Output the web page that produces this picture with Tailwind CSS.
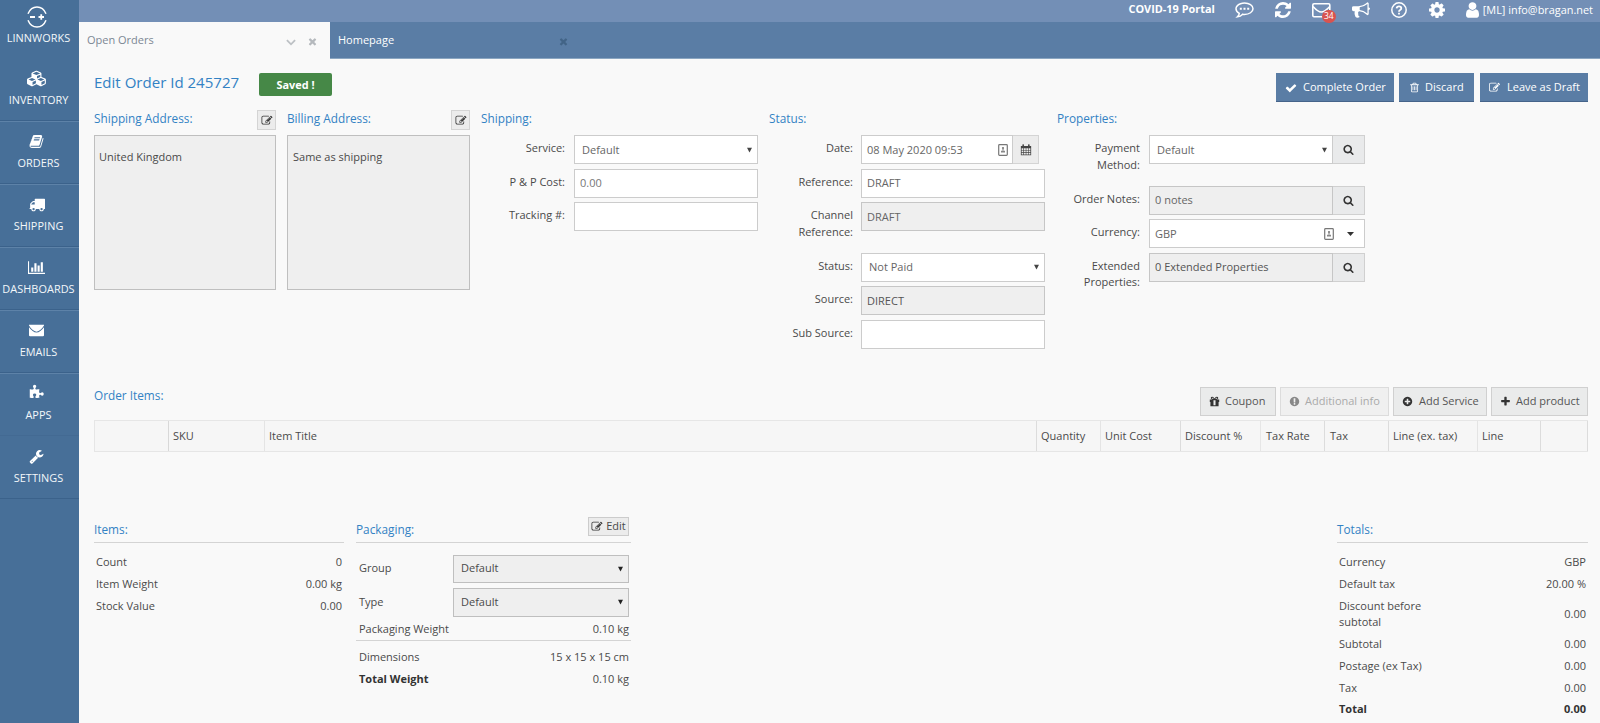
<!DOCTYPE html>
<html lang="en">
<head>
<meta charset="utf-8">
<title>Edit Order</title>
<script src="https://cdn.jsdelivr.net/npm/@tailwindcss/browser@4"></script>
</head>
<body class="h-[723px] w-[1600px] overflow-hidden bg-[#f9f9f9] font-['Open_Sans',sans-serif] text-[11px] leading-[16.75px] text-[#4a4a4a]">
<svg class="hidden" xmlns="http://www.w3.org/2000/svg">
<symbol id="check" viewBox="0 0 1792 1792"><path d="M1671 566q0 40-28 68l-724 724-136 136q-28 28-68 28t-68-28l-136-136-362-362q-28-28-28-68t28-68l136-136q28-28 68-28t68 28l294 295 656-657q28-28 68-28t68 28l136 136q28 28 28 68z"/></symbol>
<symbol id="times" viewBox="0 0 1792 1792"><path d="M1490 1322q0 40-28 68l-136 136q-28 28-68 28t-68-28l-294-294-294 294q-28 28-68 28t-68-28l-136-136q-28-28-28-68t28-68l294-294-294-294q-28-28-28-68t28-68l136-136q28-28 68-28t68 28l294 294 294-294q28-28 68-28t68 28l136 136q28 28 28 68t-28 68l-294 294 294 294q28 28 28 68z"/></symbol>
<symbol id="search" viewBox="0 0 1792 1792"><path d="M1216 832q0-185-131.5-316.5t-316.5-131.5-316.5 131.5-131.5 316.5 131.5 316.5 316.5 131.5 316.5-131.5 131.5-316.5zm512 832q0 52-38 90t-90 38q-54 0-90-38l-343-342q-179 124-399 124-143 0-273.5-55.5t-225-150-150-225-55.5-273.5 55.5-273.5 150-225 225-150 273.5-55.5 273.5 55.5 225 150 150 225 55.5 273.5q0 220-124 399l343 343q37 37 37 90z"/></symbol>
<symbol id="plus" viewBox="0 0 1792 1792"><path d="M1600 736v192q0 40-28 68t-68 28h-416v416q0 40-28 68t-68 28h-192q-40 0-68-28t-28-68v-416h-416q-40 0-68-28t-28-68v-192q0-40 28-68t68-28h416v-416q0-40 28-68t68-28h192q40 0 68 28t28 68v416h416q40 0 68 28t28 68z"/></symbol>
<symbol id="plusc" viewBox="0 0 1792 1792"><path d="M1344 960v-128q0-26-19-45t-45-19h-256v-256q0-26-19-45t-45-19h-128q-26 0-45 19t-19 45v256h-256q-26 0-45 19t-19 45v128q0 26 19 45t45 19h256v256q0 26 19 45t45 19h128q26 0 45-19t19-45v-256h256q26 0 45-19t19-45zm320-64q0 209-103 385.5t-279.5 279.5-385.5 103-385.5-103-279.5-279.5-103-385.5 103-385.5 279.5-279.5 385.5-103 385.5 103 279.5 279.5 103 385.5z"/></symbol>
<symbol id="excl" viewBox="0 0 1792 1792"><path d="M896 128q209 0 385.5 103t279.5 279.5 103 385.5-103 385.5-279.5 279.5-385.5 103-385.5-103-279.5-279.5-103-385.5 103-385.5 279.5-279.5 385.5-103zm128 1247v-190q0-14-9-23.5t-22-9.5h-192q-13 0-23 10t-10 23v190q0 13 10 23t23 10h192q13 0 22-9.5t9-23.5zm-2-344l18-621q0-12-10-18-10-8-24-8h-220q-14 0-24 8-10 6-10 18l17 621q0 10 10 17.5t24 7.5h185q14 0 23.5-7.5t10.5-17.5z"/></symbol>
<symbol id="edit" viewBox="0 0 1792 1792"><path d="M888 1184l116-116-152-152-116 116v56h96v96h56zm440-720q-16-16-33 1l-350 350q-17 17-1 33t33-1l350-350q17-17 1-33zm80 594v190q0 119-84.5 203.5t-203.5 84.5h-832q-119 0-203.5-84.5t-84.5-203.5v-832q0-119 84.5-203.5t203.5-84.5h832q63 0 117 25 15 7 18 23 3 17-9 29l-49 49q-14 14-32 8-23-6-45-6h-832q-66 0-113 47t-47 113v832q0 66 47 113t113 47h832q66 0 113-47t47-113v-126q0-13 9-22l64-64q15-15 35-7t20 29zm-96-738l288 288-672 672h-288v-288zm444 132l-92 92-288-288 92-92q28-28 68-28t68 28l152 152q28 28 28 68t-28 68z"/></symbol>
<symbol id="trash" viewBox="0 0 1792 1792"><path d="M704 736v576q0 14-9 23t-23 9h-64q-14 0-23-9t-9-23v-576q0-14 9-23t23-9h64q14 0 23 9t9 23zm256 0v576q0 14-9 23t-23 9h-64q-14 0-23-9t-9-23v-576q0-14 9-23t23-9h64q14 0 23 9t9 23zm256 0v576q0 14-9 23t-23 9h-64q-14 0-23-9t-9-23v-576q0-14 9-23t23-9h64q14 0 23 9t9 23zm128 724v-948h-896v948q0 22 7 40.5t14.5 27 10.5 8.5h832q3 0 10.5-8.5t14.5-27 7-40.5zm-672-1076h448l-48-117q-7-9-17-11h-317q-10 2-17 11zm928 32v64q0 14-9 23t-23 9h-96v948q0 83-47 143.5t-113 60.5h-832q-66 0-113-58.5t-47-141.5v-952h-96q-14 0-23-9t-9-23v-64q0-14 9-23t23-9h309l70-167q15-37 54-63t79-26h320q40 0 79 26t54 63l70 167h309q14 0 23 9t9 23z"/></symbol>
<symbol id="env" viewBox="0 0 16 14"><path d="M0 .8h16v.9Q12.500 7.600 8 8.200 3.500 7.600 0 1.700zM0 3.400Q3.800 8.700 8 9.200 12.200 8.700 16 3.400V12q0 1.200-1.200 1.200H1.200Q0 13.200 0 12z"/></symbol>
<symbol id="chart" viewBox="0 0 2048 1792"><path d="M640 896v512h-256v-512h256zm384-512v1024h-256v-1024h256zm1024 1152v128h-2048v-1536h128v1408h1920zm-640-896v768h-256v-768h256zm384-384v1152h-256v-1152h256z"/></symbol>
<symbol id="wrench" viewBox="0 0 1792 1792"><path d="M448 1472q0-26-19-45t-45-19-45 19-19 45 19 45 45 19 45-19 19-45zm644-420l-682 682q-37 37-90 37-52 0-91-37l-106-108q-38-36-38-90 0-53 38-91l681-681q39 98 114.5 173.5t173.5 114.5zm634-435q0 39-23 106-47 134-164.500 217.500t-258.500 83.500q-185 0-316.500-131.500t-131.500-316.500 131.500-316.500 316.500-131.500q58 0 121.500 16.500t107.500 46.500q16 11 16 28t-16 28l-293 169v224l193 107q5-3 79-48.500t135.500-81 70.500-35.500q15 0 23.500 10t8.500 25z"/></symbol>
<symbol id="truck" viewBox="0 0 1792 1792"><path d="M640 1408q0-52-38-90t-90-38-90 38-38 90 38 90 90 38 90-38 38-90zm-384-512h384v-256h-158q-13 0-22 9l-195 195q-9 9-9 22v30zm1280 512q0-52-38-90t-90-38-90 38-38 90 38 90 90 38 90-38 38-90zm256-1088v1024q0 15-4 26.500t-13.500 18.500-16.500 11.500-23.500 6-22.500 2-25.500 0-22.500-.5q0 106-75 181t-181 75-181-75-75-181h-384q0 106-75 181t-181 75-181-75-75-181h-64q-3 0-22.500.5t-25.500 0-22.500-2-23.500-6-16.500-11.500-13.500-18.500-4-26.500q0-26 19-45t45-19v-320q0-8-.5-35t0-38 2.500-34.500 6.500-37 14-30.500 22.500-30l198-198q19-19 50.500-32t58.500-13h160v-192q0-26 19-45t45-19h1024q26 0 45 19t19 45z"/></symbol>
<symbol id="book" viewBox="0 0 1792 1792"><path d="M1703 478q40 57 18 129l-275 906q-19 64-76.500 107.500t-122.500 43.500h-923q-77 0-148.500-53.500t-99.500-131.500q-24-67-2-127 0-4 3-27t4-37q1-8-3-21.500t-3-19.500q2-11 8-21t16.500-23.500 16.500-23.500q23-38 45-91.500t30-91.500q3-10 .5-30t-.5-28q3-11 17-28t17-23q21-36 42-92t25-90q1-9-2.500-32t.5-28q4-13 22-30.500t22-22.500q19-26 42.500-84.500t27.500-96.500q1-8-3-25.500t-2-26.500q2-8 9-18t18-23 17-21q8-12 16.500-30.500t15-35 16-36 19.500-32 26.500-23.500 36-11.500 47.500 5.500l-1 3q38-9 51-9h761q74 0 114 56t18 130l-274 906q-36 119-71.500 153.500t-128.500 34.500h-869q-27 0-38 15-11 16-1 43 24 70 144 70h923q29 0 56-15.500t35-41.500l300-987q7-22 5-57 38 15 59 43zm-1064 2q-4 13 2 22.500t20 9.500h608q13 0 25.500-9.500t16.500-22.500l21-64q4-13-2-22.500t-20-9.500h-608q-13 0-25.500 9.500t-16.500 22.500zm-83 256q-4 13 2 22.500t20 9.500h608q13 0 25.500-9.500t16.500-22.500l21-64q4-13-2-22.500t-20-9.500h-608q-13 0-25.500 9.500t-16.500 22.500z"/></symbol>
<symbol id="user" viewBox="256 128 1280 1536"><path d="M1536 1399q0 109-62.500 187t-150.500 78h-854q-88 0-150.500-78t-62.500-187q0-85 8.500-160.500t31.500-152 58.500-131 94-89 134.500-34.500q131 128 313 128t313-128q76 0 134.500 34.500t94 89 58.500 131 31.500 152 8.500 160.500zm-256-887q0 159-112.500 271.500t-271.500 112.500-271.500-112.500-112.500-271.500 112.500-271.500 271.500-112.500 271.500 112.500 112.500 271.500z"/></symbol>
<symbol id="cog" viewBox="128 128 1536 1536"><path d="M1152 896q0-106-75-181t-181-75-181 75-75 181 75 181 181 75 181-75 75-181zm512-109v222q0 12-8 23t-20 13l-185 28q-19 54-39 91 35 50 107 138 10 12 10 25t-9 23q-27 37-99 108t-94 71q-12 0-26-9l-138-108q-44 23-91 38-16 136-29 186-7 28-36 28h-222q-14 0-24.500-8.500t-11.500-21.500l-28-184q-49-16-90-37l-141 107q-10 9-25 9-14 0-25-11-126-114-165-168-7-10-7-23 0-12 8-23 15-21 51-66.500t54-70.500q-27-50-41-99l-183-27q-13-2-21-12.500t-8-23.500v-222q0-12 8-23t19-13l186-28q14-46 39-92-40-57-107-138-10-12-10-24 0-10 9-23 26-36 98.500-107.500t94.500-71.500q13 0 26 10l138 107q44-23 91-38 16-136 29-186 7-28 36-28h222q14 0 24.500 8.500t11.500 21.500l28 184q49 16 90 37l142-107q9-9 24-9 13 0 25 10 129 119 165 170 7 8 7 22 0 12-8 23-15 21-51 66.500t-54 70.500q26 50 41 98l183 28q13 2 21 12.500t8 23.500z"/></symbol>
<symbol id="refresh" viewBox="128 128 1536 1536"><path d="M1639 1056q0 5-1 7-64 268-268 434.500t-478 166.500q-146 0-282.500-55t-243.500-157l-129 129q-19 19-45 19t-45-19-19-45v-448q0-26 19-45t45-19h448q26 0 45 19t19 45-19 45l-137 137q71 66 161 102t187 36q134 0 250-65t186-179q11-17 53-117 8-23 30-23h192q13 0 22.500 9.500t9.500 22.500zm25-800v448q0 26-19 45t-45 19h-448q-26 0-45-19t-19-45 19-45l138-138q-148-137-349-137-134 0-250 65t-186 179q-11 17-53 117-8 23-30 23h-199q-13 0-22.500-9.500t-9.500-22.500v-7q65-268 270-434.500t480-166.500q146 0 284 55.500t245 156.500l130-129q19-19 45-19t45 19 19 45z"/></symbol>
<symbol id="horn" viewBox="0 0 1792 1792"><path d="M1664 640q53 0 90.500 37.500t37.500 90.500-37.500 90.500-90.500 37.500v384q0 52-38 90t-90 38q-417-347-812-380-58 19-91 66t-31 100.500 40 92.500q-20 33-23 65.500t6 58 33.500 55 48 50 61.500 50.500q-29 58-111.500 83t-168.500 11.500-132-55.500q-7-23-29.500-87.500t-32-94.500-23-89-15-101 3.500-98.500 22-110.500h-122q-66 0-113-47t-47-113v-192q0-66 47-113t113-47h480q435 0 896-384 52 0 90 38t38 90v384zm-128 604v-954q-394 302-768 343v270q377 42 768 341z"/></symbol>
<symbol id="puzzle" viewBox="0 0 1792 1792"><path d="M1755 1083q0 81-44.500 135t-123.500 54q-41 0-77.500-17.500t-59-38-56.500-38-71-17.500q-110 0-110 124 0 39 16 115t15 115v5q-22 0-33 1-34 3-97.500 11.500t-115.500 13.500-98 5q-61 0-103-26.500t-42-83.500q0-37 17.500-71t38-56.500 38-59 17.500-77.500q0-79-54-123.500t-135-44.500q-84 0-143 45.500t-59 127.500q0 43 15 83t33.500 64.500 33.500 53 15 50.500q0 45-46 89-37 35-117 35-95 0-245-24-9-2-27.500-4t-27.500-4l-13-2q-1 0-3-1-2 0-2-1v-1024q2 1 17.500 3.500t34 5 21.500 3.500q150 24 245 24 80 0 117-35 46-44 46-89 0-22-15-50.500t-33.500-53-33.500-64.500-15-83q0-82 59-127.500t144-45.500q80 0 134 44.500t54 123.500q0 41-17.500 77.500t-38 59-38 56.500-17.500 71q0 57 42 83.500t103 26.500q64 0 180-15t163-17v2q-1 2-3.500 17.500t-5 34-3.500 21.500q-24 150-24 245 0 80 35 117 44 46 89 46 22 0 50.500-15t53-33.500 64.500-33.500 83-15q82 0 127.500 59t45.500 143z"/></symbol>
<symbol id="cubes" viewBox="0 0 2304 1792"><path d="M640 1632l384-192v-314l-384 164v342zm-64-454l404-173-404-173-404 173zm1088 454l384-192v-314l-384 164v342zm-64-454l404-173-404-173-404 173zm-448-293l384-165v-266l-384 164v267zm-64-379l441-189-441-189-441 189zm1088 518v416q0 36-19 67t-52 47l-448 224q-25 14-57 14t-57-14l-448-224q-4-2-7-4-2 2-7 4l-448 224q-25 14-57 14t-57-14l-448-224q-33-16-52-47t-19-67v-416q0-38 21.500-70t56.500-48l434-186v-400q0-38 21.500-70t56.500-48l448-192q23-10 50-10t50 10l448 192q35 16 56.500 48t21.500 70v400l434 186q36 16 57 48t21 70z"/></symbol>
<symbol id="cal" viewBox="0 0 14 14"><path fill-rule="evenodd" d="M1 2.200h1.800V.9q0-.6.600-.6h.6q.600 0 .6.600v1.300h4.800V.9q0-.6.600-.6h.6q.600 0 .6.600v1.300H13V13H1zM1.900 5v2h2V5zm2.800 0v2h2V5zm2.700 0v2h2V5zm2.700 0v2h2V5zM1.900 7.700v2h2v-2zm2.800 0v2h2v-2zm2.700 0v2h2v-2zm2.700 0v2h2v-2zM1.900 10.400v1.900h2v-1.900zm2.800 0v1.900h2v-1.900zm2.700 0v1.900h2v-1.900zm2.700 0v1.900h2v-1.900z"/></symbol>
<symbol id="gift" viewBox="0 0 14 14"><path fill-rule="evenodd" d="M1 4.500h3.600Q2 4.300 2.200 2.600 2.500 1 4.300 1.100 5.800 1.300 7 3.300 8.200 1.300 9.700 1.100q1.800-.1 2.100 1.500.2 1.700-2.400 1.900H13v3H12.200V13H1.800V7.500H1zM4.400 2.200q-1 0-1 .7 0 .6 1 .6H6q-.8-1.300-1.600-1.300zm5.200 0q1 0 1 .7 0 .6-1 .6H8q.8-1.300 1.600-1.300zM5.700 5.400v6.400h2.600V5.400z"/></symbol>
<symbol id="card" viewBox="0 0 10 12"><rect x=".7" y=".7" width="8.600" height="10.600" rx=".8" fill="#fff" stroke="#777" stroke-width="1.200"/><circle cx="5" cy="4" r="1.100" fill="#777"/><path d="M4.400 4.500h1.200v2h-1.200zM3 6.800h4v1.800H3z" fill="#888"/></symbol>
<symbol id="tri" viewBox="0 0 6 6"><path d="M0 .3h6L3 6z"/></symbol>
</svg>
<div class="flex h-full">
<nav class="flex h-full w-[79px] shrink-0 flex-col bg-[#476f98] pr-[2px] text-[10.900px] leading-4 tracking-[0.05px] text-[#f3f7fa]">
  <a class="flex h-[57px] flex-col items-center pt-[6px]">
    <svg class="-ml-[4px] h-[22px] w-[20px]" viewBox="0 0 20 22" fill="none" stroke="#fff" stroke-width="1.500"><path d="M1 7.800Q3.800 1 10 1t9 6.800M1 14.200Q3.800 21 10 21t9-6.800"/><path stroke-width="1.800" d="M3 11h5M11.500 11h5.500M14.250 8.200v5.600"/></svg>
    <span class="mt-[2px]">LINNWORKS</span></a>
  <a class="-mr-[2px] flex h-[63px] flex-col items-center pt-[13px] pr-[2px]"><svg class="-ml-[4px] h-[17px] w-[20px] fill-white"><use href="#cubes"/></svg><span class="mt-[5px]">INVENTORY</span></a>
  <a class="-mr-[2px] flex h-[63px] flex-col items-center border-t border-[#3b628b] pt-[12px] pr-[2px] shadow-[inset_0_1px_#5d82a8]"><svg class="-ml-[4px] h-[17px] w-[15px] fill-white"><use href="#book"/></svg><span class="mt-[5px]">ORDERS</span></a>
  <a class="-mr-[2px] flex h-[63px] flex-col items-center border-t border-[#3b628b] pt-[12px] pr-[2px] shadow-[inset_0_1px_#5d82a8]"><svg class="-ml-[3px] h-[17px] w-[16px] fill-white"><use href="#truck"/></svg><span class="mt-[5px]">SHIPPING</span></a>
  <a class="-mr-[2px] flex h-[63px] flex-col items-center border-t border-[#3b628b] pt-[12px] pr-[2px] shadow-[inset_0_1px_#5d82a8]"><svg class="-ml-[4px] h-[17px] w-[17px] fill-white"><use href="#chart"/></svg><span class="mt-[5px]">DASHBOARDS</span></a>
  <a class="-mr-[2px] flex h-[63px] flex-col items-center border-t border-[#3b628b] pt-[12px] pr-[2px] shadow-[inset_0_1px_#5d82a8]"><svg class="-ml-[4px] h-[17px] w-[15px] fill-white"><use href="#env"/></svg><span class="mt-[5px]">EMAILS</span></a>
  <a class="-mr-[2px] flex h-[63px] flex-col items-center border-t border-[#3b628b] pt-[11px] pr-[2px] shadow-[inset_0_1px_#5d82a8]"><svg class="-ml-[4px] h-[17px] w-[15px] fill-white"><use href="#puzzle"/></svg><span class="mt-[6px]">APPS</span></a>
  <a class="-mr-[2px] flex h-[63px] flex-col items-center border-t border-[#436a93] pt-[12px] pr-[2px]"><svg class="-ml-[4px] h-[17px] w-[15px] fill-white"><use href="#wrench"/></svg><span class="mt-[5px]">SETTINGS</span></a>
  <div class="-mr-[2px] border-t border-[#3b628b]"></div>
</nav>
<div class="flex min-w-0 flex-1 flex-col">
  <header class="flex h-[22px] items-center justify-end bg-[#738fb6] pr-[7px] text-white">
    <b class="mr-[20px] pb-[3px] text-[10.900px]">COVID-19 Portal</b>
    <svg class="-mt-[3px] mr-[21px] h-[16px] w-[19px]" viewBox="0 0 19 16" fill="none" stroke="#fff" stroke-width="1.500"><path d="M9.500 1C14.200 1 18 3.500 18 6.700s-3.800 5.700-8.500 5.700q-1 0-1.800-.2Q5.500 14.500 2.500 14.800q1.700-1.500 1.800-3.500Q1 9.600 1 6.700 1 3.500 5.500 1.700 7.400 1 9.500 1z"/><path stroke="none" fill="#fff" d="M4.800 5.700h2v2h-2zM8.500 5.700h2v2h-2zM12.200 5.700h2v2h-2z"/></svg>
    <svg class="-mt-[3px] mr-[21px] h-[16px] w-[16px] fill-white"><use href="#refresh"/></svg>
    <div class="relative mr-[21px] h-[17px] w-[19px]">
      <svg class="h-[15px] w-[19px]" viewBox="0 0 19 15" fill="none" stroke="#fff" stroke-width="1.600"><rect x=".8" y=".8" width="17" height="13" rx="1.200"/><path d="M1 3.500Q6 9 9.300 9T17.800 3.500"/></svg>
      <span class="absolute top-[7px] left-[10px] flex h-[13px] w-[14px] items-center justify-center rounded-full bg-[#d9534f] text-[8.500px] leading-none">34</span>
    </div>
    <svg class="-mt-[3px] mr-[21px] h-[18px] w-[18px] fill-white"><use href="#horn"/></svg>
    <svg class="-mt-[3px] mr-[22px] h-[16px] w-[16px]" viewBox="0 0 16 16" fill="none" stroke="#fff"><circle cx="8" cy="8" r="7.200" stroke-width="1.500"/><path stroke-width="1.800" d="M5.600 6.300Q5.900 4.300 8 4.300q2.300 0 2.300 1.900 0 1.100-1.200 1.800Q8 8.600 8 9.700M8 10.800v1.800"/></svg>
    <svg class="-mt-[3px] mr-[21px] h-[16px] w-[16px] fill-white"><use href="#cog"/></svg>
    <svg class="-mt-[3px] mr-[4px] h-[16px] w-[13px] fill-white"><use href="#user"/></svg>
    <span class="pb-[2px] text-[10.900px]">[ML] info@bragan.net</span>
  </header>
  <div class="flex h-[37px] border-b border-[#8ba6c1] bg-[#5a7da5] text-[11px]">
    <div class="-mb-px flex w-[251px] items-center bg-[#f9f9f9] pl-[8px] text-[#7c8794]"><span class="flex-1">Open Orders</span>
      <svg class="mt-[3px] mr-[11px] h-[7px] w-[10px]" viewBox="0 0 11 7" fill="none" stroke="#bcc0c4" stroke-width="2"><path d="M1 1l4.500 4.500L10 1"/></svg>
      <svg class="mt-[2px] mr-[12px] h-[11px] w-[11px] fill-[#b5b9bd]"><use href="#times"/></svg></div>
    <div class="flex w-[251px] items-center pl-[8px] text-white"><span class="flex-1">Homepage</span><svg class="mt-[2px] mr-[12px] h-[11px] w-[11px] fill-[#426487]"><use href="#times"/></svg></div>
  </div>
  <main class="flex flex-1 flex-col pr-[12px] pl-[15px]">
    <div class="flex h-[51px] pt-[14px]">
      <h1 class="w-[165px] text-[15.050px] leading-[19px] text-[#3382c4] whitespace-nowrap">Edit Order Id 245727</h1>
      <div class="flex h-[23px] w-[73px] items-center justify-center rounded-[2px] bg-[#468847] pt-px text-[10.900px] font-bold text-white">Saved !</div>
      <div class="ml-auto flex gap-[5px] text-[11px] text-white">
        <button class="flex h-[29px] w-[118px] items-center border-b border-[#45648a] bg-[#5a7da5] pt-px pl-[9px]"><svg class="mr-[6px] h-[12px] w-[12px] fill-white"><use href="#check"/></svg>Complete Order</button>
        <button class="flex h-[29px] w-[75px] items-center border-b border-[#45648a] bg-[#5a7da5] pt-px pl-[10px]"><svg class="mr-[5px] h-[11px] w-[11px] fill-white"><use href="#trash"/></svg>Discard</button>
        <button class="ml-[1px] flex h-[29px] w-[108px] items-center border-b border-[#45648a] bg-[#5a7da5] pt-px pl-[9px]"><svg class="mr-[7px] h-[11px] w-[11px] fill-white"><use href="#edit"/></svg>Leave as Draft</button>
      </div>
    </div>
    <div class="flex h-[270px]">
      <section class="mr-[11px] w-[182px]">
        <div class="flex h-[25px] justify-between"><h2 class="text-[11.800px] text-[#3382c4]">Shipping Address:</h2><button class="flex h-[20px] w-[19px] items-center justify-center border border-[#d4d4d4] bg-[#ececec]"><svg class="h-[11px] w-[12px] fill-[#333]"><use href="#edit"/></svg></button></div>
        <div class="h-[155px] border border-[#bfbfbf] bg-[#efefef] pt-[13px] pl-[4px]">United Kingdom</div>
      </section>
      <section class="mr-[11px] w-[183px]">
        <div class="flex h-[25px] justify-between"><h2 class="text-[11.800px] text-[#3382c4]">Billing Address:</h2><button class="flex h-[20px] w-[19px] items-center justify-center border border-[#d4d4d4] bg-[#ececec]"><svg class="h-[11px] w-[12px] fill-[#333]"><use href="#edit"/></svg></button></div>
        <div class="h-[155px] border border-[#bfbfbf] bg-[#efefef] pt-[13px] pl-[5px]">Same as shipping</div>
      </section>
      <section class="w-[288px]">
        <h2 class="h-[25px] text-[11.800px] text-[#3382c4]">Shipping:</h2>
        <div class="flex h-[33.500px]"><label class="mr-[9px] w-[84px] pt-[5px] text-right">Service:</label><div class="flex h-[29px] w-[184px] items-center justify-between border border-[#ccc] bg-white pt-px pr-[5px] pl-[7px] text-[#666]">Default<svg class="h-[6px] w-[5px] fill-[#444]"><use href="#tri"/></svg></div></div>
        <div class="flex h-[33.500px]"><label class="mr-[9px] w-[84px] pt-[5px] text-right">P &amp; P Cost:</label><div class="flex h-[29px] w-[184px] items-center border border-[#ccc] bg-white pt-px pl-[5px] text-[#777]">0.00</div></div>
        <div class="flex h-[33.500px]"><label class="mr-[9px] w-[84px] pt-[5px] text-right">Tracking #:</label><div class="h-[29px] w-[184px] border border-[#ccc] bg-white"></div></div>
      </section>
      <section class="w-[288px]">
        <h2 class="h-[25px] text-[11.800px] text-[#3382c4]">Status:</h2>
        <div class="flex h-[33.500px]"><label class="mr-[8px] w-[84px] pt-[5px] text-right">Date:</label><div class="flex h-[29px] w-[152px] items-center justify-between border border-[#ccc] bg-white pt-px pr-[4px] pl-[5px] text-[#666]">08 May 2020 09:53<svg class="h-[12px] w-[10px]"><use href="#card"/></svg></div><div class="flex h-[29px] w-[26px] items-center justify-center border border-l-0 border-[#d4d4d4] bg-[#ececec]"><svg class="h-[12px] w-[12px] fill-[#444]"><use href="#cal"/></svg></div></div>
        <div class="flex h-[33.500px]"><label class="mr-[8px] w-[84px] pt-[5px] text-right">Reference:</label><div class="flex h-[29px] w-[184px] items-center border border-[#ccc] bg-white pt-px pl-[5px] text-[#666]">DRAFT</div></div>
        <div class="flex h-[50.500px]"><label class="mr-[8px] w-[84px] pt-[5px] text-right">Channel<br>Reference:</label><div class="flex h-[29px] w-[184px] items-center border border-[#c6c6c6] bg-[#efefef] pt-px pl-[5px] text-[#666]">DRAFT</div></div>
        <div class="flex h-[33.500px]"><label class="mr-[8px] w-[84px] pt-[5px] text-right">Status:</label><div class="flex h-[29px] w-[184px] items-center justify-between border border-[#ccc] bg-white pr-[5px] pl-[7px] text-[#666]">Not Paid<svg class="h-[6px] w-[5px] fill-[#444]"><use href="#tri"/></svg></div></div>
        <div class="flex h-[33.500px]"><label class="mr-[8px] w-[84px] pt-[5px] text-right">Source:</label><div class="flex h-[29px] w-[184px] items-center border border-[#c6c6c6] bg-[#efefef] pt-px pl-[5px] text-[#555]">DIRECT</div></div>
        <div class="flex h-[33.500px]"><label class="mr-[8px] w-[84px] pt-[5px] text-right">Sub Source:</label><div class="h-[29px] w-[184px] border border-[#ccc] bg-white"></div></div>
      </section>
      <section class="w-[308px]">
        <h2 class="h-[25px] text-[11.800px] text-[#3382c4]">Properties:</h2>
        <div class="flex h-[50.500px]"><label class="mr-[9px] w-[83px] pt-[5px] text-right">Payment<br>Method:</label><div class="flex h-[29px] w-[184px] items-center justify-between border border-[#ccc] bg-white pt-px pr-[5px] pl-[7px] text-[#666]">Default<svg class="h-[6px] w-[5px] fill-[#444]"><use href="#tri"/></svg></div><div class="flex h-[29px] w-[32px] items-center justify-center border border-l-0 border-[#d0d0d0] bg-[#e9eaeb]"><svg class="h-[11px] w-[11px] fill-[#333]"><use href="#search"/></svg></div></div>
        <div class="flex h-[33.500px]"><label class="mr-[9px] w-[83px] pt-[5px] text-right">Order Notes:</label><div class="flex h-[29px] w-[184px] items-center border border-[#c6c6c6] bg-[#efefef] pl-[5px] text-[#666]">0 notes</div><div class="flex h-[29px] w-[32px] items-center justify-center border border-l-0 border-[#d0d0d0] bg-[#e9eaeb]"><svg class="h-[11px] w-[11px] fill-[#333]"><use href="#search"/></svg></div></div>
        <div class="flex h-[33.500px]"><label class="mr-[9px] w-[83px] pt-[5px] text-right">Currency:</label><div class="flex h-[29px] w-[216px] items-center border border-[#ccc] bg-white pt-px pl-[5px] text-[#666]"><span class="flex-1">GBP</span><svg class="mr-[13px] h-[12px] w-[10px]"><use href="#card"/></svg><svg class="mr-[10px] h-[4px] w-[7px] fill-[#333]" viewBox="0 0 7 4"><path d="M0 0h7L3.500 4z"/></svg></div></div>
        <div class="flex h-[33.500px]"><label class="mr-[9px] w-[83px] pt-[5px] text-right">Extended<br>Properties:</label><div class="flex h-[29px] w-[184px] items-center border border-[#c6c6c6] bg-[#efefef] pl-[5px] text-[#555]">0 Extended Properties</div><div class="flex h-[29px] w-[32px] items-center justify-center border border-l-0 border-[#d0d0d0] bg-[#e9eaeb]"><svg class="h-[11px] w-[11px] fill-[#333]"><use href="#search"/></svg></div></div>
      </section>
    </div>
    <div class="flex h-[40px] pt-[7px]">
      <h2 class="text-[11.800px] text-[#3382c4]">Order Items:</h2>
      <div class="ml-auto flex gap-[4px] text-[11px] text-[#555]">
        <button class="flex h-[29px] w-[76px] items-center border border-[#d0d0d0] bg-[#eaebeb] pl-[8px]"><svg class="mr-[5px] h-[11px] w-[11px] fill-[#333]"><use href="#gift"/></svg>Coupon</button>
        <button class="flex h-[29px] w-[109px] items-center border border-[#dcdcdc] bg-[#f0f0f0] pl-[8px] text-[#aaa]"><svg class="mr-[5px] h-[11px] w-[11px] fill-[#888]"><use href="#excl"/></svg>Additional info</button>
        <button class="flex h-[29px] w-[94px] items-center border border-[#d0d0d0] bg-[#eaebeb] pl-[8px]"><svg class="mr-[6px] h-[11px] w-[11px] fill-[#333]"><use href="#plusc"/></svg>Add Service</button>
        <button class="flex h-[29px] w-[97px] items-center border border-[#d0d0d0] bg-[#eaebeb] pl-[8px]"><svg class="mr-[5px] h-[11px] w-[11px] fill-[#333]"><use href="#plus"/></svg>Add product</button>
      </div>
    </div>
    <div class="grid h-[32px] w-[1494px] grid-cols-[75px_96px_772px_64px_80px_80px_64px_64px_89px_63px_47px] items-stretch border-y border-[#e6e6e6] bg-[#f6f6f6] leading-[29px] whitespace-nowrap">
      <div class="border-x border-r-[#d8d8d8] border-l-[#e6e6e6]"></div><div class="border-r border-[#e4e4e4] pl-[4px]">SKU</div><div class="border-r border-[#dcdcdc] pl-[4px]">Item Title</div><div class="border-r border-[#e4e4e4] pl-[4px]">Quantity</div><div class="border-r border-[#dcdcdc] pl-[4px]">Unit Cost</div><div class="border-r border-[#e6e6e6] pl-[4px]">Discount %</div><div class="border-r border-[#dcdcdc] pl-[5px]">Tax Rate</div><div class="border-r border-[#dcdcdc] pl-[5px]">Tax</div><div class="border-r border-[#e4e4e4] pl-[4px]">Line (ex. tax)</div><div class="border-r border-[#dcdcdc] pl-[4px]">Line</div><div class="border-r border-[#dcdcdc]"></div>
    </div>
    <div class="mt-[65px] flex">
      <section class="w-[250px]">
        <h2 class="h-[26px] border-b border-[#d4d4d4] pt-[3.500px] text-[11.800px] text-[#3382c4]">Items:</h2>
        <dl class="grid grid-cols-[1fr_auto] gap-y-[5px] px-[2px] pt-[11px]"><dt>Count</dt><dd class="text-right">0</dd><dt>Item Weight</dt><dd class="text-right">0.00 kg</dd><dt>Stock Value</dt><dd class="text-right">0.00</dd></dl>
      </section>
      <section class="ml-[12px] w-[275px]">
        <div class="flex h-[26px] justify-between border-b border-[#d4d4d4] pr-[2px]"><h2 class="pt-[3.500px] text-[11.800px] text-[#3382c4]">Packaging:</h2><button class="flex h-[19px] w-[41px] items-center justify-center gap-[3px] border border-[#ccc] bg-[#ececec]"><svg class="h-[11px] w-[12px] fill-[#333]"><use href="#edit"/></svg>Edit</button></div>
        <div class="mt-[9px] flex h-[33.500px] items-center pr-[2px] pl-[3px]"><span class="w-[94px]">Group</span><div class="flex h-[28px] w-[176px] items-center justify-between border border-[#bfbfbf] bg-[#efefef] pr-[5px] pl-[7px]">Default<svg class="h-[6px] w-[5px] fill-[#222]"><use href="#tri"/></svg></div></div>
        <div class="flex h-[33.500px] items-center pr-[2px] pl-[3px]"><span class="w-[94px]">Type</span><div class="flex h-[29px] w-[176px] items-center justify-between border border-[#bfbfbf] bg-[#efefef] pr-[5px] pl-[7px]">Default<svg class="h-[6px] w-[5px] fill-[#222]"><use href="#tri"/></svg></div></div>
        <div class="flex h-[22px] justify-between border-b border-[#d4d4d4] pt-[2px] pr-[2px] pl-[3px]"><span>Packaging Weight</span><span>0.10 kg</span></div>
        <div class="flex justify-between pt-[8px] pr-[2px] pl-[3px]"><span>Dimensions</span><span>15 x 15 x 15 cm</span></div>
        <div class="flex justify-between pt-[5px] pr-[2px] pl-[3px]"><b class="text-[#333]">Total Weight</b><span>0.10 kg</span></div>
      </section>
      <section class="ml-auto w-[251px]">
        <h2 class="h-[26px] border-b border-[#d4d4d4] pt-[3.500px] text-[11.800px] text-[#3382c4]">Totals:</h2>
        <dl class="grid grid-cols-[100px_1fr] items-center gap-y-[5px] px-[2px] pt-[11px]"><dt>Currency</dt><dd class="text-right">GBP</dd><dt>Default tax</dt><dd class="text-right">20.00 %</dd><dt>Discount before<br>subtotal</dt><dd class="text-right">0.00</dd><dt>Subtotal</dt><dd class="text-right">0.00</dd><dt>Postage (ex Tax)</dt><dd class="text-right">0.00</dd><dt>Tax</dt><dd class="text-right">0.00</dd><dt class="font-bold text-[#333]">Total</dt><dd class="text-right font-bold text-[#333]">0.00</dd></dl>
      </section>
    </div>
  </main>
</div>
</div>
</body>
</html>
